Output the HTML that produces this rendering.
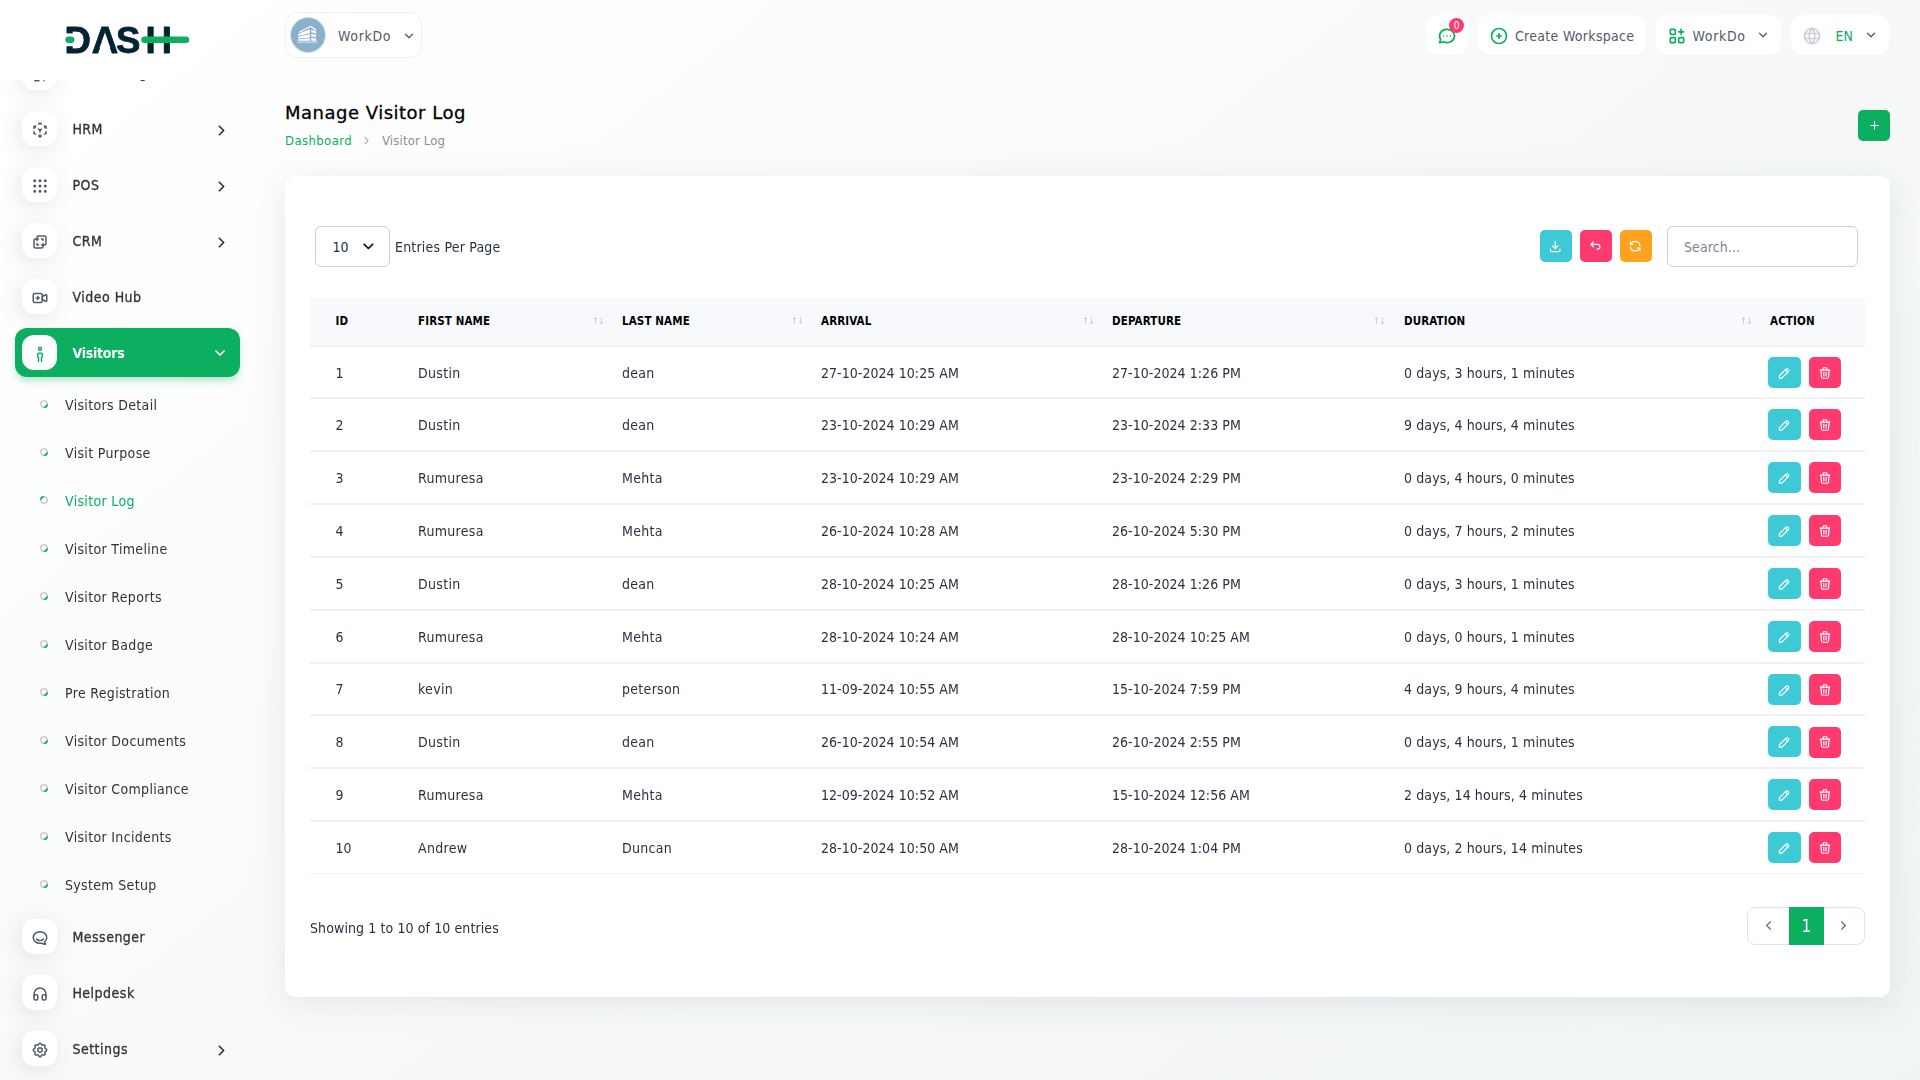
<!DOCTYPE html>
<html lang="en">
<head>
<meta charset="utf-8">
<title>Manage Visitor Log</title>
<style>
*{box-sizing:border-box;margin:0;padding:0}
html,body{width:1920px;height:1080px;overflow:hidden}
body{font-family:"DejaVu Sans Condensed","DejaVu Sans","Liberation Sans",sans-serif;font-stretch:condensed;font-size:14px;color:#293240;
background:linear-gradient(141.55deg,rgba(240,244,243,0) 3.46%,#f0f4f3 99.86%),#fff;position:relative}
.abs{position:absolute}
svg{display:block;overflow:visible}
.ic{fill:none;stroke:currentColor;stroke-width:2;stroke-linecap:round;stroke-linejoin:round}
/* ---------- sidebar ---------- */
#sidebar{position:absolute;left:0;top:0;width:280px;height:1080px;will-change:transform}
#sbscroll{position:absolute;left:0;top:80px;width:280px;height:1000px;overflow:hidden}
.mi{position:absolute;left:15px;width:225px;height:49px;border-radius:12px}
.mi .box{position:absolute;left:7px;top:7px;width:35px;height:35px;border-radius:12px;background:#fff;
box-shadow:-3px 4px 23px rgba(0,0,0,.1);color:#525b69}
.mi .box svg{position:absolute;left:9.3px;top:9.8px;width:18px;height:18px}
.mi .t{position:absolute;left:57.4px;top:1px;line-height:49px;font-size:14px;color:#333;white-space:nowrap;letter-spacing:.5px;-webkit-text-stroke:.3px #333}
.mi .arr{position:absolute;color:#333}
.mi.act{background:#0caf60;box-shadow:0 5px 7px -1px rgba(12,175,96,.3)}
.mi.act .t{color:#fff;font-weight:bold;-webkit-text-stroke:0;letter-spacing:-.25px}
.mi.act .box{color:#0caf60;box-shadow:none}
.mi.act .arr{color:#fff}
.si{position:absolute;left:0;width:280px;height:48px}
.si .bl{position:absolute;left:39px;top:19px}
.si .t{position:absolute;left:65px;top:1px;line-height:48px;font-size:14px;color:#333;white-space:nowrap;letter-spacing:.33px}
.si.on .t{color:#0caf60}
/* ---------- header ---------- */
.hb{position:absolute;top:15px;height:40px;background:#fff;border-radius:12px;box-shadow:0 1px 2px rgba(0,0,0,.02)}
/* ---------- card ---------- */
#card{position:absolute;left:285px;top:176px;width:1605px;height:821px;background:#fff;border-radius:10px;box-shadow:0 6px 30px rgba(182,186,203,.3)}
.btn{position:absolute;border-radius:5px;color:#fff}
.c-info{background:#3ec9d6}.c-dang{background:#ff3a6e}.c-warn{background:#ffa21d}.c-prim{background:#0caf60}
.ht{font-size:14px;color:#525b69;white-space:nowrap}
#logo{position:absolute;left:0;top:0}
</style>
</head>
<body>
<div id="sidebar">
<div id="sbscroll">
<div class="mi" style="top:-32.0px"><span class="box"><svg class="ic" viewBox="0 0 24 24"><path d="M4 19v-14a2 2 0 0 1 2 -2h12a2 2 0 0 1 2 2v12"/><rect x="8" y="7" width="8" height="3" rx="1"/><path d="M8 14v.01"/><path d="M12 14v.01"/><path d="M16 14v.01"/><path d="M5 21h5.6"/><path d="M17.4 21v.01"/></svg></span><span class="t">Accounting</span><span class="arr" style="left:198.4px;top:17.5px;width:17px;height:17px"><svg class="ic" viewBox="0 0 24 24" style="stroke-width:2.4"><path d="M9 6l6 6l-6 6"/></svg></span></div>
<div class="mi" style="top:24.0px"><span class="box"><svg class="ic" viewBox="0 0 24 24"><path d="M6 17.6l-2 -1.1v-2.5"/><path d="M4 10v-2.5l2 -1.1"/><path d="M10 4.1l2 -1.1l2 1.1"/><path d="M18 6.4l2 1.1v2.5"/><path d="M20 14v2.5l-2 1.12"/><path d="M14 19.9l-2 1.1l-2 -1.1"/><path d="M12 12l2 -1.1"/><path d="M18 8.6l2 -1.1"/><path d="M12 12v2.5"/><path d="M12 18.5v2.5"/><path d="M12 12l-2 -1.12"/><path d="M6 8.6l-2 -1.1"/></svg></span><span class="t">HRM</span><span class="arr" style="left:198.4px;top:17.5px;width:17px;height:17px"><svg class="ic" viewBox="0 0 24 24" style="stroke-width:2.4"><path d="M9 6l6 6l-6 6"/></svg></span></div>
<div class="mi" style="top:80.0px"><span class="box"><svg class="ic" viewBox="0 0 24 24"><circle cx="5" cy="5" r="1"/><circle cx="12" cy="5" r="1"/><circle cx="19" cy="5" r="1"/><circle cx="5" cy="12" r="1"/><circle cx="12" cy="12" r="1"/><circle cx="19" cy="12" r="1"/><circle cx="5" cy="19" r="1"/><circle cx="12" cy="19" r="1"/><circle cx="19" cy="19" r="1"/></svg></span><span class="t">POS</span><span class="arr" style="left:198.4px;top:17.5px;width:17px;height:17px"><svg class="ic" viewBox="0 0 24 24" style="stroke-width:2.4"><path d="M9 6l6 6l-6 6"/></svg></span></div>
<div class="mi" style="top:136.0px"><span class="box"><svg class="ic" viewBox="0 0 24 24"><path d="M16 16v2a2 2 0 0 1 -2 2h-8a2 2 0 0 1 -2 -2v-8a2 2 0 0 1 2 -2h2v-2a2 2 0 0 1 2 -2h8a2 2 0 0 1 2 2v8a2 2 0 0 1 -2 2h-2"/><path d="M10 8h-2v2"/><path d="M8 14v2h2"/><path d="M14 8h2v2"/><path d="M16 14v2h-2"/></svg></span><span class="t">CRM</span><span class="arr" style="left:198.4px;top:17.5px;width:17px;height:17px"><svg class="ic" viewBox="0 0 24 24" style="stroke-width:2.4"><path d="M9 6l6 6l-6 6"/></svg></span></div>
<div class="mi" style="top:192.0px"><span class="box"><svg class="ic" viewBox="0 0 24 24"><path d="M15 10l4.553 -2.276a1 1 0 0 1 1.447 .894v6.764a1 1 0 0 1 -1.447 .894l-4.553 -2.276v-4z"/><rect x="3" y="6" width="12" height="12" rx="2"/><path d="M7 12h4"/><path d="M9 10v4"/></svg></span><span class="t">Video Hub</span></div>
<div class="mi act" style="top:248.0px"><span class="box"><svg class="ic" viewBox="0 0 24 24"><circle cx="12" cy="5" r="2"/><path d="M10 22v-5l-1 -1v-4a1 1 0 0 1 1 -1h4a1 1 0 0 1 1 1v4l-1 1v5"/></svg></span><span class="t">Visitors</span><span class="arr" style="left:197.4px;top:16.7px;width:16px;height:16px"><svg class="ic" viewBox="0 0 24 24" style="stroke-width:2.6"><path d="M6 9l6 6l6 -6"/></svg></span></div>
<div class="si" style="top:300px"><svg class="bl" viewBox="0 0 10 10" width="10" height="10"><circle cx="5" cy="5" r="3.3" fill="none" stroke="#c9ceda" stroke-width="1.6"/><path d="M8.1 6.13A3.3 3.3 0 0 1 5.85 8.2" fill="none" stroke="#0caf60" stroke-width="1.8" stroke-linecap="round"/></svg><span class="t">Visitors Detail</span></div>
<div class="si" style="top:348px"><svg class="bl" viewBox="0 0 10 10" width="10" height="10"><circle cx="5" cy="5" r="3.3" fill="none" stroke="#c9ceda" stroke-width="1.6"/><path d="M8.1 6.13A3.3 3.3 0 0 1 5.85 8.2" fill="none" stroke="#0caf60" stroke-width="1.8" stroke-linecap="round"/></svg><span class="t">Visit Purpose</span></div>
<div class="si on" style="top:396px"><svg class="bl" viewBox="0 0 10 10" width="10" height="10"><circle cx="5" cy="5" r="3.3" fill="none" stroke="#c9ceda" stroke-width="1.6"/><path d="M1.9 3.87A3.3 3.3 0 0 1 4.15 1.81" fill="none" stroke="#0caf60" stroke-width="1.8" stroke-linecap="round"/></svg><span class="t">Visitor Log</span></div>
<div class="si" style="top:444px"><svg class="bl" viewBox="0 0 10 10" width="10" height="10"><circle cx="5" cy="5" r="3.3" fill="none" stroke="#c9ceda" stroke-width="1.6"/><path d="M8.1 6.13A3.3 3.3 0 0 1 5.85 8.2" fill="none" stroke="#0caf60" stroke-width="1.8" stroke-linecap="round"/></svg><span class="t">Visitor Timeline</span></div>
<div class="si" style="top:492px"><svg class="bl" viewBox="0 0 10 10" width="10" height="10"><circle cx="5" cy="5" r="3.3" fill="none" stroke="#c9ceda" stroke-width="1.6"/><path d="M8.1 6.13A3.3 3.3 0 0 1 5.85 8.2" fill="none" stroke="#0caf60" stroke-width="1.8" stroke-linecap="round"/></svg><span class="t">Visitor Reports</span></div>
<div class="si" style="top:540px"><svg class="bl" viewBox="0 0 10 10" width="10" height="10"><circle cx="5" cy="5" r="3.3" fill="none" stroke="#c9ceda" stroke-width="1.6"/><path d="M8.1 6.13A3.3 3.3 0 0 1 5.85 8.2" fill="none" stroke="#0caf60" stroke-width="1.8" stroke-linecap="round"/></svg><span class="t">Visitor Badge</span></div>
<div class="si" style="top:588px"><svg class="bl" viewBox="0 0 10 10" width="10" height="10"><circle cx="5" cy="5" r="3.3" fill="none" stroke="#c9ceda" stroke-width="1.6"/><path d="M8.1 6.13A3.3 3.3 0 0 1 5.85 8.2" fill="none" stroke="#0caf60" stroke-width="1.8" stroke-linecap="round"/></svg><span class="t">Pre Registration</span></div>
<div class="si" style="top:636px"><svg class="bl" viewBox="0 0 10 10" width="10" height="10"><circle cx="5" cy="5" r="3.3" fill="none" stroke="#c9ceda" stroke-width="1.6"/><path d="M8.1 6.13A3.3 3.3 0 0 1 5.85 8.2" fill="none" stroke="#0caf60" stroke-width="1.8" stroke-linecap="round"/></svg><span class="t">Visitor Documents</span></div>
<div class="si" style="top:684px"><svg class="bl" viewBox="0 0 10 10" width="10" height="10"><circle cx="5" cy="5" r="3.3" fill="none" stroke="#c9ceda" stroke-width="1.6"/><path d="M8.1 6.13A3.3 3.3 0 0 1 5.85 8.2" fill="none" stroke="#0caf60" stroke-width="1.8" stroke-linecap="round"/></svg><span class="t">Visitor Compliance</span></div>
<div class="si" style="top:732px"><svg class="bl" viewBox="0 0 10 10" width="10" height="10"><circle cx="5" cy="5" r="3.3" fill="none" stroke="#c9ceda" stroke-width="1.6"/><path d="M8.1 6.13A3.3 3.3 0 0 1 5.85 8.2" fill="none" stroke="#0caf60" stroke-width="1.8" stroke-linecap="round"/></svg><span class="t">Visitor Incidents</span></div>
<div class="si" style="top:780px"><svg class="bl" viewBox="0 0 10 10" width="10" height="10"><circle cx="5" cy="5" r="3.3" fill="none" stroke="#c9ceda" stroke-width="1.6"/><path d="M8.1 6.13A3.3 3.3 0 0 1 5.85 8.2" fill="none" stroke="#0caf60" stroke-width="1.8" stroke-linecap="round"/></svg><span class="t">System Setup</span></div>
<div class="mi" style="top:832.0px"><span class="box"><svg class="ic" viewBox="0 0 24 24"><path d="M17.802 17.292s.077 -.055 .2 -.149c1.843 -1.425 3 -3.49 3 -5.789c0 -4.286 -4.03 -7.764 -9 -7.764c-4.97 0 -9 3.478 -9 7.764c0 4.288 4.03 7.646 9 7.646c.424 0 1.12 -.028 2.088 -.084c1.262 .82 3.104 1.493 4.716 1.493c.499 0 .734 -.41 .414 -.828c-.486 -.596 -1.156 -1.551 -1.416 -2.29z"/><path d="M7.5 13.5c2.5 2.5 6.5 2.5 9 0"/></svg></span><span class="t">Messenger</span></div>
<div class="mi" style="top:888.0px"><span class="box"><svg class="ic" viewBox="0 0 24 24"><rect x="4" y="13" width="5" height="7" rx="2"/><rect x="15" y="13" width="5" height="7" rx="2"/><path d="M4 15v-3a8 8 0 0 1 16 0v3"/></svg></span><span class="t">Helpdesk</span></div>
<div class="mi" style="top:944.0px"><span class="box"><svg class="ic" viewBox="0 0 24 24"><path d="M10.325 4.317c.426 -1.756 2.924 -1.756 3.35 0a1.724 1.724 0 0 0 2.573 1.066c1.543 -.94 3.31 .826 2.37 2.37a1.724 1.724 0 0 0 1.065 2.572c1.756 .426 1.756 2.924 0 3.35a1.724 1.724 0 0 0 -1.066 2.573c.94 1.543 -.826 3.31 -2.37 2.37a1.724 1.724 0 0 0 -2.572 1.065c-.426 1.756 -2.924 1.756 -3.35 0a1.724 1.724 0 0 0 -2.573 -1.066c-1.543 .94 -3.31 -.826 -2.37 -2.37a1.724 1.724 0 0 0 -1.065 -2.572c-1.756 -.426 -1.756 -2.924 0 -3.35a1.724 1.724 0 0 0 1.066 -2.573c-.94 -1.543 .826 -3.31 2.37 -2.37c1 .608 2.296 .07 2.572 -1.065z"/><circle cx="12" cy="12" r="3"/></svg></span><span class="t">Settings</span><span class="arr" style="left:198.4px;top:17.5px;width:17px;height:17px"><svg class="ic" viewBox="0 0 24 24" style="stroke-width:2.4"><path d="M9 6l6 6l-6 6"/></svg></span></div>
</div>
<div id="logo"><svg width="134" height="40" viewBox="60 20 134 40" style="position:absolute;left:60px;top:20px">
<text y="52.9" font-family="Liberation Sans, sans-serif" font-stretch="normal" font-weight="bold" font-size="36.6" text-anchor="middle" fill="#002333" stroke="#002333" stroke-width=".8" stroke-linejoin="round"><tspan x="77.6">D</tspan><tspan x="105">A</tspan><tspan x="128.2">S</tspan><tspan x="158.6">H</tspan></text>
<rect x="62" y="33.4" width="12.2" height="12.8" fill="#fff"/>
<path d="M105 33.5l-5.4 14h10.8z" fill="#fff"/>
<rect x="65.4" y="36.6" width="9" height="6.4" rx="3.2" fill="#0caf60"/>
<rect x="141.2" y="36.6" width="48" height="6.4" rx="3.2" fill="#0caf60"/>
</svg></div>
</div>
<div id="main">
<div class="abs" style="left:285px;top:12px;width:137px;height:46px;border:1px solid #f0f0f1;border-radius:12px;background:rgba(255,255,255,.55)"></div>
<span class="abs" style="left:290.8px;top:17.8px;width:34.2px;height:34.2px;border-radius:50%;background:#8bb0cc;box-shadow:0 0 0 1px rgba(12,175,96,.22);overflow:hidden"><svg viewBox="0 0 34.4 34.4" width="34.2" height="34.2"><g fill="#fff"><path d="M8.4 13.6L19.7 7.7v1.3L8.4 14.8z"/><path d="M7.2 16.2L19 11.4v3.6L7.2 18z"/><path d="M7.2 18.8L19 16v3.7L7.2 20.6z"/><path d="M7.2 21.3L19 20.4v2.5H7.2z"/><path d="M19.7 7.7l5.6 3.7v1.4l-5.6 -3.6z"/><path d="M20.4 11.8l4.9 1.6v2.2l-4.9 -1.2z"/><path d="M20.4 16l4.9 .9v2.3l-4.9 -.4z"/><path d="M20.4 20.2l4.9 .4v2.3h-4.9z"/><path d="M6.3 23.5h20.3v1.8H6.3z" opacity=".4"/></g></svg></span>
<div class="abs ht" style="left:338px;top:28px;font-size:14px;line-height:normal;white-space:nowrap;letter-spacing:.65px">WorkDo</div>
<span class="abs" style="left:401.80px;top:28.50px;width:14px;height:14px;color:#525b69"><svg class="ic" viewBox="0 0 24 24" style="stroke-width:2.2"><path d="M6 9l6 6l6 -6"/></svg></span>
<div class="hb" style="left:1426px;width:42px"></div>
<span class="abs" style="left:1437.10px;top:26.00px;width:20px;height:20px;color:#0caf60"><svg class="ic" viewBox="0 0 24 24"><path d="M3 20l1.3 -3.9a9 8 0 1 1 3.4 2.9l-4.7 1"/><path d="M12 12v.01"/><path d="M8 12v.01"/><path d="M16 12v.01"/></svg></span>
<span class="abs" style="left:1449px;top:17.5px;width:15px;height:15px;border-radius:50%;background:#ff3a6e;color:#fff;font-size:10px;line-height:15px;text-align:center">0</span>
<div class="hb" style="left:1478px;width:168px"></div>
<span class="abs" style="left:1489.20px;top:25.60px;width:20px;height:20px;color:#0caf60"><svg class="ic" viewBox="0 0 24 24"><circle cx="12" cy="12" r="9"/><path d="M9 12h6"/><path d="M12 9v6"/></svg></span>
<div class="abs ht" style="left:1515px;top:28px;font-size:14px;line-height:normal;white-space:nowrap;letter-spacing:.3px">Create Workspace</div>
<div class="hb" style="left:1656px;width:125px"></div>
<span class="abs" style="left:1667.10px;top:26.00px;width:20px;height:20px;color:#0caf60"><svg class="ic" viewBox="0 0 24 24"><rect x="4" y="4" width="6" height="6" rx="1"/><rect x="4" y="14" width="6" height="6" rx="1"/><rect x="14" y="14" width="6" height="6" rx="1"/><path d="M14 7h6"/><path d="M17 4v6"/></svg></span>
<div class="abs ht" style="left:1692.5px;top:28px;font-size:14px;line-height:normal;white-space:nowrap;letter-spacing:.65px">WorkDo</div>
<span class="abs" style="left:1756.30px;top:28.40px;width:14px;height:14px;color:#525b69"><svg class="ic" viewBox="0 0 24 24" style="stroke-width:2.2"><path d="M6 9l6 6l6 -6"/></svg></span>
<div class="hb" style="left:1791px;width:98px"></div>
<span class="abs" style="left:1802.40px;top:26.00px;width:20px;height:20px;color:#cdd0d6"><svg class="ic" viewBox="0 0 24 24"><circle cx="12" cy="12" r="9"/><path d="M3.6 9h16.8"/><path d="M3.6 15h16.8"/><path d="M11.5 3a17 17 0 0 0 0 18"/><path d="M12.5 3a17 17 0 0 1 0 18"/></svg></span>
<div class="abs ht" style="left:1835.5px;top:28px;font-size:14px;line-height:normal;white-space:nowrap;color:#0caf60">EN</div>
<span class="abs" style="left:1864.20px;top:28.40px;width:14px;height:14px;color:#525b69"><svg class="ic" viewBox="0 0 24 24" style="stroke-width:2.2"><path d="M6 9l6 6l6 -6"/></svg></span>
<div class="abs ttl" style="left:285px;top:102px;font-size:18px;line-height:normal;white-space:nowrap;color:#000;font-family:DejaVu Sans,Liberation Sans,sans-serif;font-stretch:normal;letter-spacing:.5px;-webkit-text-stroke:.3px #000">Manage Visitor Log</div>
<div class="abs" style="left:285px;top:133px;font-size:13px;line-height:normal;white-space:nowrap;color:#0caf60;letter-spacing:.4px">Dashboard</div>
<span class="abs" style="left:360.40px;top:133.80px;width:13px;height:13px;color:#777e88"><svg class="ic" viewBox="0 0 24 24" style="stroke-width:1.8"><path d="M9 6l6 6l-6 6"/></svg></span>
<div class="abs" style="left:382px;top:133px;font-size:13px;line-height:normal;white-space:nowrap;color:#8a8f98;letter-spacing:.15px">Visitor Log</div>
<div class="btn c-prim" style="left:1858px;top:110px;width:32px;height:31px"></div>
<span class="abs" style="left:1867.50px;top:119.00px;width:13px;height:13px;color:#fff"><svg class="ic" viewBox="0 0 24 24"><path d="M12 5v14"/><path d="M5 12h14"/></svg></span>
<div id="card"></div>
<div class="abs" style="left:315px;top:226px;width:75px;height:41px;border:1px solid #c9d1dc;border-radius:6px;background:#fff"></div>
<div class="abs" style="left:332.5px;top:239px;font-size:14px;line-height:normal;white-space:nowrap;color:#293240">10</div>
<span class="abs" style="left:359.70px;top:238.20px;width:16.8px;height:16.8px;color:#14171a"><svg class="ic" viewBox="0 0 24 24" style="stroke-width:2.5"><path d="M6 9l6 6l6 -6"/></svg></span>
<div class="abs" style="left:395px;top:239px;font-size:14px;line-height:normal;white-space:nowrap;color:#293240;letter-spacing:.2px">Entries Per Page</div>
<div class="btn c-info" style="left:1540px;top:230px;width:32px;height:32px"></div>
<span class="abs" style="left:1548.10px;top:239.30px;width:14.4px;height:14.4px;color:#fff"><svg class="ic" viewBox="0 0 24 24"><path d="M4 17v2a2 2 0 0 0 2 2h12a2 2 0 0 0 2 -2v-2"/><path d="M7 11l5 5l5 -5"/><path d="M12 4v12"/></svg></span>
<div class="btn c-dang" style="left:1580px;top:230px;width:32px;height:32px"></div>
<span class="abs" style="left:1588.10px;top:239.30px;width:14.4px;height:14.4px;color:#fff"><svg class="ic" viewBox="0 0 24 24"><path d="M9 13l-4 -4l4 -4m-4 4h11a4 4 0 0 1 0 8h-1"/></svg></span>
<div class="btn c-warn" style="left:1620px;top:230px;width:32px;height:32px"></div>
<span class="abs" style="left:1628.10px;top:239.30px;width:14.4px;height:14.4px;color:#fff"><svg class="ic" viewBox="0 0 24 24"><path d="M20 11a8.1 8.1 0 0 0 -15.5 -2m-.5 -4v4h4"/><path d="M4 13a8.1 8.1 0 0 0 15.5 2m.5 4v-4h-4"/></svg></span>
<div class="abs" style="left:1667px;top:226px;width:191px;height:41px;border:1px solid #c9d1dc;border-radius:6px;background:#fff"></div>
<div class="abs" style="left:1684px;top:239px;font-size:14px;line-height:normal;white-space:nowrap;color:#7f8692;letter-spacing:.1px">Search...</div>
<div class="abs" style="left:310px;top:298px;width:1555px;height:47px;background:#f8f9fd"></div>
<div class="abs" style="left:310px;top:345px;width:1555px;height:2px;background:#f1f1f1"></div>
<div class="abs" style="left:335.5px;top:314px;font-size:11.5px;line-height:normal;white-space:nowrap;font-weight:bold;color:#000;letter-spacing:.12px">ID</div>
<div class="abs" style="left:418px;top:314px;font-size:11.5px;line-height:normal;white-space:nowrap;font-weight:bold;color:#000;letter-spacing:.12px">FIRST NAME</div>
<span class="abs" style="left:593px;top:316px;width:12px;height:10px"><svg viewBox="0 0 12 10" width="12" height="10" class="ic" style="stroke-width:1;stroke-linecap:butt"><path d="M2.5 8.1v-6.4" stroke="#d0d2d8"/><path d="M1.2 2.9l1.3 -1.5l1.3 1.5" stroke="#c4c6cc"/><path d="M8.5 1.1v6.4" stroke="#d0d2d8"/><path d="M7.2 6.3l1.3 1.5l1.3 -1.5" stroke="#c4c6cc"/></svg></span>
<div class="abs" style="left:622px;top:314px;font-size:11.5px;line-height:normal;white-space:nowrap;font-weight:bold;color:#000;letter-spacing:.12px">LAST NAME</div>
<span class="abs" style="left:792px;top:316px;width:12px;height:10px"><svg viewBox="0 0 12 10" width="12" height="10" class="ic" style="stroke-width:1;stroke-linecap:butt"><path d="M2.5 8.1v-6.4" stroke="#d0d2d8"/><path d="M1.2 2.9l1.3 -1.5l1.3 1.5" stroke="#c4c6cc"/><path d="M8.5 1.1v6.4" stroke="#d0d2d8"/><path d="M7.2 6.3l1.3 1.5l1.3 -1.5" stroke="#c4c6cc"/></svg></span>
<div class="abs" style="left:821px;top:314px;font-size:11.5px;line-height:normal;white-space:nowrap;font-weight:bold;color:#000;letter-spacing:.12px">ARRIVAL</div>
<span class="abs" style="left:1083px;top:316px;width:12px;height:10px"><svg viewBox="0 0 12 10" width="12" height="10" class="ic" style="stroke-width:1;stroke-linecap:butt"><path d="M2.5 8.1v-6.4" stroke="#d0d2d8"/><path d="M1.2 2.9l1.3 -1.5l1.3 1.5" stroke="#c4c6cc"/><path d="M8.5 1.1v6.4" stroke="#d0d2d8"/><path d="M7.2 6.3l1.3 1.5l1.3 -1.5" stroke="#c4c6cc"/></svg></span>
<div class="abs" style="left:1112px;top:314px;font-size:11.5px;line-height:normal;white-space:nowrap;font-weight:bold;color:#000;letter-spacing:.12px">DEPARTURE</div>
<span class="abs" style="left:1374px;top:316px;width:12px;height:10px"><svg viewBox="0 0 12 10" width="12" height="10" class="ic" style="stroke-width:1;stroke-linecap:butt"><path d="M2.5 8.1v-6.4" stroke="#d0d2d8"/><path d="M1.2 2.9l1.3 -1.5l1.3 1.5" stroke="#c4c6cc"/><path d="M8.5 1.1v6.4" stroke="#d0d2d8"/><path d="M7.2 6.3l1.3 1.5l1.3 -1.5" stroke="#c4c6cc"/></svg></span>
<div class="abs" style="left:1404px;top:314px;font-size:11.5px;line-height:normal;white-space:nowrap;font-weight:bold;color:#000;letter-spacing:.12px">DURATION</div>
<span class="abs" style="left:1741px;top:316px;width:12px;height:10px"><svg viewBox="0 0 12 10" width="12" height="10" class="ic" style="stroke-width:1;stroke-linecap:butt"><path d="M2.5 8.1v-6.4" stroke="#d0d2d8"/><path d="M1.2 2.9l1.3 -1.5l1.3 1.5" stroke="#c4c6cc"/><path d="M8.5 1.1v6.4" stroke="#d0d2d8"/><path d="M7.2 6.3l1.3 1.5l1.3 -1.5" stroke="#c4c6cc"/></svg></span>
<div class="abs" style="left:1770px;top:314px;font-size:11.5px;line-height:normal;white-space:nowrap;font-weight:bold;color:#000;letter-spacing:.12px">ACTION</div>
<div class="abs" style="left:335.5px;top:365px;font-size:14px;line-height:normal;white-space:nowrap;color:#293240;letter-spacing:0px">1</div>
<div class="abs" style="left:418px;top:365px;font-size:14px;line-height:normal;white-space:nowrap;color:#293240;letter-spacing:0.3px">Dustin</div>
<div class="abs" style="left:622px;top:365px;font-size:14px;line-height:normal;white-space:nowrap;color:#293240;letter-spacing:0.3px">dean</div>
<div class="abs" style="left:821px;top:365px;font-size:14px;line-height:normal;white-space:nowrap;color:#293240;letter-spacing:0.05px">27-10-2024 10:25 AM</div>
<div class="abs" style="left:1112px;top:365px;font-size:14px;line-height:normal;white-space:nowrap;color:#293240;letter-spacing:0.05px">27-10-2024 1:26 PM</div>
<div class="abs" style="left:1404px;top:365px;font-size:14px;line-height:normal;white-space:nowrap;color:#293240;letter-spacing:0.1px">0 days, 3 hours, 1 minutes</div>
<div class="btn c-info" style="left:1768px;top:357px;width:33px;height:31px"></div>
<span class="abs" style="left:1777.30px;top:365.60px;width:14.6px;height:14.6px;color:#fff"><svg class="ic" viewBox="0 0 24 24"><path d="M4 20h4l10.5 -10.5a1.5 1.5 0 0 0 -4 -4l-10.5 10.5v4"/><path d="M13.5 6.5l4 4"/></svg></span>
<div class="btn c-dang" style="left:1809px;top:357px;width:32px;height:31px"></div>
<span class="abs" style="left:1818.10px;top:365.60px;width:14px;height:14px;color:#fff"><svg class="ic" viewBox="0 0 24 24"><path d="M4 7h16"/><path d="M10 11v6"/><path d="M14 11v6"/><path d="M5 7l1 12a2 2 0 0 0 2 2h8a2 2 0 0 0 2 -2l1 -12"/><path d="M9 7v-3a1 1 0 0 1 1 -1h4a1 1 0 0 1 1 1v3"/></svg></span>
<div class="abs" style="left:310px;top:397px;width:1555px;height:2px;background:#f1f1f1"></div>
<div class="abs" style="left:335.5px;top:417px;font-size:14px;line-height:normal;white-space:nowrap;color:#293240;letter-spacing:0px">2</div>
<div class="abs" style="left:418px;top:417px;font-size:14px;line-height:normal;white-space:nowrap;color:#293240;letter-spacing:0.3px">Dustin</div>
<div class="abs" style="left:622px;top:417px;font-size:14px;line-height:normal;white-space:nowrap;color:#293240;letter-spacing:0.3px">dean</div>
<div class="abs" style="left:821px;top:417px;font-size:14px;line-height:normal;white-space:nowrap;color:#293240;letter-spacing:0.05px">23-10-2024 10:29 AM</div>
<div class="abs" style="left:1112px;top:417px;font-size:14px;line-height:normal;white-space:nowrap;color:#293240;letter-spacing:0.05px">23-10-2024 2:33 PM</div>
<div class="abs" style="left:1404px;top:417px;font-size:14px;line-height:normal;white-space:nowrap;color:#293240;letter-spacing:0.1px">9 days, 4 hours, 4 minutes</div>
<div class="btn c-info" style="left:1768px;top:409px;width:33px;height:31px"></div>
<span class="abs" style="left:1777.30px;top:417.60px;width:14.6px;height:14.6px;color:#fff"><svg class="ic" viewBox="0 0 24 24"><path d="M4 20h4l10.5 -10.5a1.5 1.5 0 0 0 -4 -4l-10.5 10.5v4"/><path d="M13.5 6.5l4 4"/></svg></span>
<div class="btn c-dang" style="left:1809px;top:409px;width:32px;height:31px"></div>
<span class="abs" style="left:1818.10px;top:417.60px;width:14px;height:14px;color:#fff"><svg class="ic" viewBox="0 0 24 24"><path d="M4 7h16"/><path d="M10 11v6"/><path d="M14 11v6"/><path d="M5 7l1 12a2 2 0 0 0 2 2h8a2 2 0 0 0 2 -2l1 -12"/><path d="M9 7v-3a1 1 0 0 1 1 -1h4a1 1 0 0 1 1 1v3"/></svg></span>
<div class="abs" style="left:310px;top:450px;width:1555px;height:2px;background:#f1f1f1"></div>
<div class="abs" style="left:335.5px;top:470px;font-size:14px;line-height:normal;white-space:nowrap;color:#293240;letter-spacing:0px">3</div>
<div class="abs" style="left:418px;top:470px;font-size:14px;line-height:normal;white-space:nowrap;color:#293240;letter-spacing:0.3px">Rumuresa</div>
<div class="abs" style="left:622px;top:470px;font-size:14px;line-height:normal;white-space:nowrap;color:#293240;letter-spacing:0.3px">Mehta</div>
<div class="abs" style="left:821px;top:470px;font-size:14px;line-height:normal;white-space:nowrap;color:#293240;letter-spacing:0.05px">23-10-2024 10:29 AM</div>
<div class="abs" style="left:1112px;top:470px;font-size:14px;line-height:normal;white-space:nowrap;color:#293240;letter-spacing:0.05px">23-10-2024 2:29 PM</div>
<div class="abs" style="left:1404px;top:470px;font-size:14px;line-height:normal;white-space:nowrap;color:#293240;letter-spacing:0.1px">0 days, 4 hours, 0 minutes</div>
<div class="btn c-info" style="left:1768px;top:462px;width:33px;height:31px"></div>
<span class="abs" style="left:1777.30px;top:470.60px;width:14.6px;height:14.6px;color:#fff"><svg class="ic" viewBox="0 0 24 24"><path d="M4 20h4l10.5 -10.5a1.5 1.5 0 0 0 -4 -4l-10.5 10.5v4"/><path d="M13.5 6.5l4 4"/></svg></span>
<div class="btn c-dang" style="left:1809px;top:462px;width:32px;height:31px"></div>
<span class="abs" style="left:1818.10px;top:470.60px;width:14px;height:14px;color:#fff"><svg class="ic" viewBox="0 0 24 24"><path d="M4 7h16"/><path d="M10 11v6"/><path d="M14 11v6"/><path d="M5 7l1 12a2 2 0 0 0 2 2h8a2 2 0 0 0 2 -2l1 -12"/><path d="M9 7v-3a1 1 0 0 1 1 -1h4a1 1 0 0 1 1 1v3"/></svg></span>
<div class="abs" style="left:310px;top:503px;width:1555px;height:2px;background:#f1f1f1"></div>
<div class="abs" style="left:335.5px;top:523px;font-size:14px;line-height:normal;white-space:nowrap;color:#293240;letter-spacing:0px">4</div>
<div class="abs" style="left:418px;top:523px;font-size:14px;line-height:normal;white-space:nowrap;color:#293240;letter-spacing:0.3px">Rumuresa</div>
<div class="abs" style="left:622px;top:523px;font-size:14px;line-height:normal;white-space:nowrap;color:#293240;letter-spacing:0.3px">Mehta</div>
<div class="abs" style="left:821px;top:523px;font-size:14px;line-height:normal;white-space:nowrap;color:#293240;letter-spacing:0.05px">26-10-2024 10:28 AM</div>
<div class="abs" style="left:1112px;top:523px;font-size:14px;line-height:normal;white-space:nowrap;color:#293240;letter-spacing:0.05px">26-10-2024 5:30 PM</div>
<div class="abs" style="left:1404px;top:523px;font-size:14px;line-height:normal;white-space:nowrap;color:#293240;letter-spacing:0.1px">0 days, 7 hours, 2 minutes</div>
<div class="btn c-info" style="left:1768px;top:515px;width:33px;height:31px"></div>
<span class="abs" style="left:1777.30px;top:523.60px;width:14.6px;height:14.6px;color:#fff"><svg class="ic" viewBox="0 0 24 24"><path d="M4 20h4l10.5 -10.5a1.5 1.5 0 0 0 -4 -4l-10.5 10.5v4"/><path d="M13.5 6.5l4 4"/></svg></span>
<div class="btn c-dang" style="left:1809px;top:515px;width:32px;height:31px"></div>
<span class="abs" style="left:1818.10px;top:523.60px;width:14px;height:14px;color:#fff"><svg class="ic" viewBox="0 0 24 24"><path d="M4 7h16"/><path d="M10 11v6"/><path d="M14 11v6"/><path d="M5 7l1 12a2 2 0 0 0 2 2h8a2 2 0 0 0 2 -2l1 -12"/><path d="M9 7v-3a1 1 0 0 1 1 -1h4a1 1 0 0 1 1 1v3"/></svg></span>
<div class="abs" style="left:310px;top:556px;width:1555px;height:2px;background:#f1f1f1"></div>
<div class="abs" style="left:335.5px;top:576px;font-size:14px;line-height:normal;white-space:nowrap;color:#293240;letter-spacing:0px">5</div>
<div class="abs" style="left:418px;top:576px;font-size:14px;line-height:normal;white-space:nowrap;color:#293240;letter-spacing:0.3px">Dustin</div>
<div class="abs" style="left:622px;top:576px;font-size:14px;line-height:normal;white-space:nowrap;color:#293240;letter-spacing:0.3px">dean</div>
<div class="abs" style="left:821px;top:576px;font-size:14px;line-height:normal;white-space:nowrap;color:#293240;letter-spacing:0.05px">28-10-2024 10:25 AM</div>
<div class="abs" style="left:1112px;top:576px;font-size:14px;line-height:normal;white-space:nowrap;color:#293240;letter-spacing:0.05px">28-10-2024 1:26 PM</div>
<div class="abs" style="left:1404px;top:576px;font-size:14px;line-height:normal;white-space:nowrap;color:#293240;letter-spacing:0.1px">0 days, 3 hours, 1 minutes</div>
<div class="btn c-info" style="left:1768px;top:568px;width:33px;height:31px"></div>
<span class="abs" style="left:1777.30px;top:576.60px;width:14.6px;height:14.6px;color:#fff"><svg class="ic" viewBox="0 0 24 24"><path d="M4 20h4l10.5 -10.5a1.5 1.5 0 0 0 -4 -4l-10.5 10.5v4"/><path d="M13.5 6.5l4 4"/></svg></span>
<div class="btn c-dang" style="left:1809px;top:568px;width:32px;height:31px"></div>
<span class="abs" style="left:1818.10px;top:576.60px;width:14px;height:14px;color:#fff"><svg class="ic" viewBox="0 0 24 24"><path d="M4 7h16"/><path d="M10 11v6"/><path d="M14 11v6"/><path d="M5 7l1 12a2 2 0 0 0 2 2h8a2 2 0 0 0 2 -2l1 -12"/><path d="M9 7v-3a1 1 0 0 1 1 -1h4a1 1 0 0 1 1 1v3"/></svg></span>
<div class="abs" style="left:310px;top:609px;width:1555px;height:2px;background:#f1f1f1"></div>
<div class="abs" style="left:335.5px;top:629px;font-size:14px;line-height:normal;white-space:nowrap;color:#293240;letter-spacing:0px">6</div>
<div class="abs" style="left:418px;top:629px;font-size:14px;line-height:normal;white-space:nowrap;color:#293240;letter-spacing:0.3px">Rumuresa</div>
<div class="abs" style="left:622px;top:629px;font-size:14px;line-height:normal;white-space:nowrap;color:#293240;letter-spacing:0.3px">Mehta</div>
<div class="abs" style="left:821px;top:629px;font-size:14px;line-height:normal;white-space:nowrap;color:#293240;letter-spacing:0.05px">28-10-2024 10:24 AM</div>
<div class="abs" style="left:1112px;top:629px;font-size:14px;line-height:normal;white-space:nowrap;color:#293240;letter-spacing:0.05px">28-10-2024 10:25 AM</div>
<div class="abs" style="left:1404px;top:629px;font-size:14px;line-height:normal;white-space:nowrap;color:#293240;letter-spacing:0.1px">0 days, 0 hours, 1 minutes</div>
<div class="btn c-info" style="left:1768px;top:621px;width:33px;height:31px"></div>
<span class="abs" style="left:1777.30px;top:629.60px;width:14.6px;height:14.6px;color:#fff"><svg class="ic" viewBox="0 0 24 24"><path d="M4 20h4l10.5 -10.5a1.5 1.5 0 0 0 -4 -4l-10.5 10.5v4"/><path d="M13.5 6.5l4 4"/></svg></span>
<div class="btn c-dang" style="left:1809px;top:621px;width:32px;height:31px"></div>
<span class="abs" style="left:1818.10px;top:629.60px;width:14px;height:14px;color:#fff"><svg class="ic" viewBox="0 0 24 24"><path d="M4 7h16"/><path d="M10 11v6"/><path d="M14 11v6"/><path d="M5 7l1 12a2 2 0 0 0 2 2h8a2 2 0 0 0 2 -2l1 -12"/><path d="M9 7v-3a1 1 0 0 1 1 -1h4a1 1 0 0 1 1 1v3"/></svg></span>
<div class="abs" style="left:310px;top:662px;width:1555px;height:2px;background:#f1f1f1"></div>
<div class="abs" style="left:335.5px;top:681px;font-size:14px;line-height:normal;white-space:nowrap;color:#293240;letter-spacing:0px">7</div>
<div class="abs" style="left:418px;top:681px;font-size:14px;line-height:normal;white-space:nowrap;color:#293240;letter-spacing:0.3px">kevin</div>
<div class="abs" style="left:622px;top:681px;font-size:14px;line-height:normal;white-space:nowrap;color:#293240;letter-spacing:0.3px">peterson</div>
<div class="abs" style="left:821px;top:681px;font-size:14px;line-height:normal;white-space:nowrap;color:#293240;letter-spacing:0.05px">11-09-2024 10:55 AM</div>
<div class="abs" style="left:1112px;top:681px;font-size:14px;line-height:normal;white-space:nowrap;color:#293240;letter-spacing:0.05px">15-10-2024 7:59 PM</div>
<div class="abs" style="left:1404px;top:681px;font-size:14px;line-height:normal;white-space:nowrap;color:#293240;letter-spacing:0.1px">4 days, 9 hours, 4 minutes</div>
<div class="btn c-info" style="left:1768px;top:674px;width:33px;height:31px"></div>
<span class="abs" style="left:1777.30px;top:682.60px;width:14.6px;height:14.6px;color:#fff"><svg class="ic" viewBox="0 0 24 24"><path d="M4 20h4l10.5 -10.5a1.5 1.5 0 0 0 -4 -4l-10.5 10.5v4"/><path d="M13.5 6.5l4 4"/></svg></span>
<div class="btn c-dang" style="left:1809px;top:674px;width:32px;height:31px"></div>
<span class="abs" style="left:1818.10px;top:682.60px;width:14px;height:14px;color:#fff"><svg class="ic" viewBox="0 0 24 24"><path d="M4 7h16"/><path d="M10 11v6"/><path d="M14 11v6"/><path d="M5 7l1 12a2 2 0 0 0 2 2h8a2 2 0 0 0 2 -2l1 -12"/><path d="M9 7v-3a1 1 0 0 1 1 -1h4a1 1 0 0 1 1 1v3"/></svg></span>
<div class="abs" style="left:310px;top:714px;width:1555px;height:2px;background:#f1f1f1"></div>
<div class="abs" style="left:335.5px;top:734px;font-size:14px;line-height:normal;white-space:nowrap;color:#293240;letter-spacing:0px">8</div>
<div class="abs" style="left:418px;top:734px;font-size:14px;line-height:normal;white-space:nowrap;color:#293240;letter-spacing:0.3px">Dustin</div>
<div class="abs" style="left:622px;top:734px;font-size:14px;line-height:normal;white-space:nowrap;color:#293240;letter-spacing:0.3px">dean</div>
<div class="abs" style="left:821px;top:734px;font-size:14px;line-height:normal;white-space:nowrap;color:#293240;letter-spacing:0.05px">26-10-2024 10:54 AM</div>
<div class="abs" style="left:1112px;top:734px;font-size:14px;line-height:normal;white-space:nowrap;color:#293240;letter-spacing:0.05px">26-10-2024 2:55 PM</div>
<div class="abs" style="left:1404px;top:734px;font-size:14px;line-height:normal;white-space:nowrap;color:#293240;letter-spacing:0.1px">0 days, 4 hours, 1 minutes</div>
<div class="btn c-info" style="left:1768px;top:726px;width:33px;height:31px"></div>
<span class="abs" style="left:1777.30px;top:734.60px;width:14.6px;height:14.6px;color:#fff"><svg class="ic" viewBox="0 0 24 24"><path d="M4 20h4l10.5 -10.5a1.5 1.5 0 0 0 -4 -4l-10.5 10.5v4"/><path d="M13.5 6.5l4 4"/></svg></span>
<div class="btn c-dang" style="left:1809px;top:727px;width:32px;height:31px"></div>
<span class="abs" style="left:1818.10px;top:734.60px;width:14px;height:14px;color:#fff"><svg class="ic" viewBox="0 0 24 24"><path d="M4 7h16"/><path d="M10 11v6"/><path d="M14 11v6"/><path d="M5 7l1 12a2 2 0 0 0 2 2h8a2 2 0 0 0 2 -2l1 -12"/><path d="M9 7v-3a1 1 0 0 1 1 -1h4a1 1 0 0 1 1 1v3"/></svg></span>
<div class="abs" style="left:310px;top:767px;width:1555px;height:2px;background:#f1f1f1"></div>
<div class="abs" style="left:335.5px;top:787px;font-size:14px;line-height:normal;white-space:nowrap;color:#293240;letter-spacing:0px">9</div>
<div class="abs" style="left:418px;top:787px;font-size:14px;line-height:normal;white-space:nowrap;color:#293240;letter-spacing:0.3px">Rumuresa</div>
<div class="abs" style="left:622px;top:787px;font-size:14px;line-height:normal;white-space:nowrap;color:#293240;letter-spacing:0.3px">Mehta</div>
<div class="abs" style="left:821px;top:787px;font-size:14px;line-height:normal;white-space:nowrap;color:#293240;letter-spacing:0.05px">12-09-2024 10:52 AM</div>
<div class="abs" style="left:1112px;top:787px;font-size:14px;line-height:normal;white-space:nowrap;color:#293240;letter-spacing:0.05px">15-10-2024 12:56 AM</div>
<div class="abs" style="left:1404px;top:787px;font-size:14px;line-height:normal;white-space:nowrap;color:#293240;letter-spacing:0.1px">2 days, 14 hours, 4 minutes</div>
<div class="btn c-info" style="left:1768px;top:779px;width:33px;height:31px"></div>
<span class="abs" style="left:1777.30px;top:787.60px;width:14.6px;height:14.6px;color:#fff"><svg class="ic" viewBox="0 0 24 24"><path d="M4 20h4l10.5 -10.5a1.5 1.5 0 0 0 -4 -4l-10.5 10.5v4"/><path d="M13.5 6.5l4 4"/></svg></span>
<div class="btn c-dang" style="left:1809px;top:779px;width:32px;height:31px"></div>
<span class="abs" style="left:1818.10px;top:787.60px;width:14px;height:14px;color:#fff"><svg class="ic" viewBox="0 0 24 24"><path d="M4 7h16"/><path d="M10 11v6"/><path d="M14 11v6"/><path d="M5 7l1 12a2 2 0 0 0 2 2h8a2 2 0 0 0 2 -2l1 -12"/><path d="M9 7v-3a1 1 0 0 1 1 -1h4a1 1 0 0 1 1 1v3"/></svg></span>
<div class="abs" style="left:310px;top:820px;width:1555px;height:2px;background:#f1f1f1"></div>
<div class="abs" style="left:335.5px;top:840px;font-size:14px;line-height:normal;white-space:nowrap;color:#293240;letter-spacing:0px">10</div>
<div class="abs" style="left:418px;top:840px;font-size:14px;line-height:normal;white-space:nowrap;color:#293240;letter-spacing:0.3px">Andrew</div>
<div class="abs" style="left:622px;top:840px;font-size:14px;line-height:normal;white-space:nowrap;color:#293240;letter-spacing:0.3px">Duncan</div>
<div class="abs" style="left:821px;top:840px;font-size:14px;line-height:normal;white-space:nowrap;color:#293240;letter-spacing:0.05px">28-10-2024 10:50 AM</div>
<div class="abs" style="left:1112px;top:840px;font-size:14px;line-height:normal;white-space:nowrap;color:#293240;letter-spacing:0.05px">28-10-2024 1:04 PM</div>
<div class="abs" style="left:1404px;top:840px;font-size:14px;line-height:normal;white-space:nowrap;color:#293240;letter-spacing:0.1px">0 days, 2 hours, 14 minutes</div>
<div class="btn c-info" style="left:1768px;top:832px;width:33px;height:31px"></div>
<span class="abs" style="left:1777.30px;top:840.60px;width:14.6px;height:14.6px;color:#fff"><svg class="ic" viewBox="0 0 24 24"><path d="M4 20h4l10.5 -10.5a1.5 1.5 0 0 0 -4 -4l-10.5 10.5v4"/><path d="M13.5 6.5l4 4"/></svg></span>
<div class="btn c-dang" style="left:1809px;top:832px;width:32px;height:31px"></div>
<span class="abs" style="left:1818.10px;top:840.60px;width:14px;height:14px;color:#fff"><svg class="ic" viewBox="0 0 24 24"><path d="M4 7h16"/><path d="M10 11v6"/><path d="M14 11v6"/><path d="M5 7l1 12a2 2 0 0 0 2 2h8a2 2 0 0 0 2 -2l1 -12"/><path d="M9 7v-3a1 1 0 0 1 1 -1h4a1 1 0 0 1 1 1v3"/></svg></span>
<div class="abs" style="left:310px;top:873px;width:1555px;height:1px;background:#f1f1f1"></div>
<div class="abs" style="left:310px;top:920px;font-size:14px;line-height:normal;white-space:nowrap;color:#293240;letter-spacing:.1px">Showing 1 to 10 of 10 entries</div>
<div class="abs" style="left:1747px;top:907px;width:118px;height:38px;border:1px solid #dee2e6;border-radius:8px;background:#fff"></div>
<span class="abs c-prim" style="left:1789px;top:907px;width:35px;height:38px"></span>
<span class="abs" style="left:1761.00px;top:918.00px;width:15px;height:15px;color:#5b6b8c"><svg class="ic" viewBox="0 0 24 24" style="stroke-width:1.9"><path d="M15 6l-6 6l6 6"/></svg></span>
<div class="abs" style="left:1801.4px;top:916px;font-size:17px;line-height:normal;white-space:nowrap;color:#fff">1</div>
<span class="abs" style="left:1836.00px;top:918.00px;width:15px;height:15px;color:#5b6b8c"><svg class="ic" viewBox="0 0 24 24" style="stroke-width:1.9"><path d="M9 6l6 6l-6 6"/></svg></span>
</div>
</body>
</html>
